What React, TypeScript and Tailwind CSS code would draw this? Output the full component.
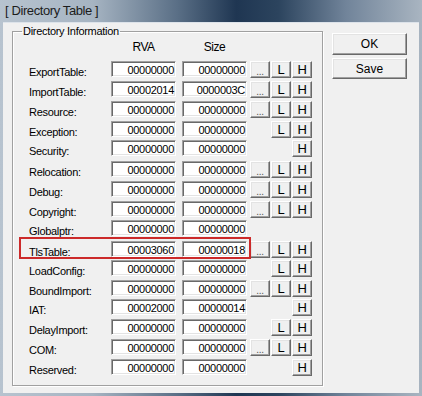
type Row = {
  name: string;
  rva: string;
  size: string;
  btns: string; // slot codes: D = "...", L, H, - = empty
  h: string; // row pitch
  mark?: boolean;
};

const rows: Row[] = [
  { name: 'ExportTable:', rva: '00000000', size: '00000000', btns: 'DLH', h: 'h-[20px]' },
  { name: 'ImportTable:', rva: '00002014', size: '0000003C', btns: 'DLH', h: 'h-[20px]' },
  { name: 'Resource:', rva: '00000000', size: '00000000', btns: 'DLH', h: 'h-[20px]' },
  { name: 'Exception:', rva: '00000000', size: '00000000', btns: '-LH', h: 'h-[19px]' },
  { name: 'Security:', rva: '00000000', size: '00000000', btns: '--H', h: 'h-[21px]' },
  { name: 'Relocation:', rva: '00000000', size: '00000000', btns: 'DLH', h: 'h-[20px]' },
  { name: 'Debug:', rva: '00000000', size: '00000000', btns: 'DLH', h: 'h-[20px]' },
  { name: 'Copyright:', rva: '00000000', size: '00000000', btns: 'DLH', h: 'h-[19px]' },
  { name: 'Globalptr:', rva: '00000000', size: '00000000', btns: '---', h: 'h-[21px]' },
  { name: 'TlsTable:', rva: '00003060', size: '00000018', btns: 'DLH', h: 'h-[19px]', mark: true },
  { name: 'LoadConfig:', rva: '00000000', size: '00000000', btns: '-LH', h: 'h-[20px]' },
  { name: 'BoundImport:', rva: '00000000', size: '00000000', btns: 'DLH', h: 'h-[19px]' },
  { name: 'IAT:', rva: '00002000', size: '00000014', btns: '--H', h: 'h-[20px]' },
  { name: 'DelayImport:', rva: '00000000', size: '00000000', btns: '-LH', h: 'h-[20px]' },
  { name: 'COM:', rva: '00000000', size: '00000000', btns: 'DLH', h: 'h-[20px]' },
  { name: 'Reserved:', rva: '00000000', size: '00000000', btns: '--H', h: 'h-[17px]' },
];

const raised =
  'bg-[#f0f0f0] border border-t-white border-l-white border-r-[#696969] border-b-[#696969] shadow-[inset_-1px_-1px_0_#a0a0a0,inset_1px_1px_0_#e3e3e3]';

const sunken =
  'bg-white border border-t-[#a0a0a0] border-l-[#a0a0a0] border-r-white border-b-white shadow-[inset_1px_1px_0_#696969,inset_-1px_-1px_0_#e3e3e3]';

function Field({ value }: { value: string }) {
  return (
    <div className={`w-[65px] h-[16px] pt-[1px] pr-[1px] text-right text-[11px] leading-[14px] tracking-[-0.3px] text-black ${sunken}`}>
      {value}
    </div>
  );
}

function SmallButton({ code }: { code: string }) {
  if (code === '-') return <div className="w-[20px] h-[17px]" />;
  return (
    <button
      className={`w-[20px] h-[17px] flex items-center justify-center ${raised} ${
        code === 'D' ? 'text-[10px] text-[#555] pt-[3px]' : 'text-[13px] text-black'
      }`}
    >
      {code === 'D' ? '...' : code}
    </button>
  );
}

export default function App() {
  return (
    <div className="w-[422px] h-[396px] flex flex-col bg-[linear-gradient(90deg,#b7c3cf_0%,#a6b4c2_22%,#5a6f86_42%,#1f3652_56%,#2c445e_66%,#71849a_82%,#a9b5c1_100%)] font-['Liberation_Sans',Arial,sans-serif] overflow-hidden">
      {/* title bar */}
      <div className="h-[22px] px-[5px] flex items-center text-[13px] tracking-[-0.4px] text-[#1c1c1c]">
        [ Directory Table ]
      </div>

      {/* client area */}
      <div className="flex-1 mx-[3px] mb-[3px] bg-[#f0f0f0] border-t border-[#dde3ea] flex items-start pt-[1px] pl-[9px]">
        <fieldset className="w-[311px] h-[362px] p-0 m-0 border border-[#a0a0a0] shadow-[inset_1px_1px_0_#fff,1px_1px_0_#fff] text-[11px] tracking-[-0.3px] text-black">
          <legend className="ml-[9px] px-[1px] leading-[14px]">Directory Information</legend>

          <div className="mt-[1px] h-[16px] flex pl-[16px] text-[12px] leading-[16px] tracking-[-0.5px]">
            <div className="w-[82px]" />
            <div className="w-[65px] text-center">RVA</div>
            <div className="w-[65px] ml-[6px] text-center">Size</div>
          </div>

          <div className="mt-[6px] flex flex-col">
            {rows.map(r => (
              <div key={r.name} className={`relative flex items-start pl-[16px] ${r.h}`}>
                <div className="w-[82px] pt-[3px] leading-[16px] h-[16px] whitespace-nowrap">{r.name}</div>
                <Field value={r.rva} />
                <div className="ml-[6px]">
                  <Field value={r.size} />
                </div>
                <div className="ml-[3px] flex gap-[1px]">
                  {r.btns.split('').map((c, i) => (
                    <SmallButton key={i} code={c} />
                  ))}
                </div>
                {r.mark && (
                  <div className="absolute left-[6px] top-[-4px] w-[232px] h-[22px] border-2 border-[#cc2a2a] pointer-events-none" />
                )}
              </div>
            ))}
          </div>
        </fieldset>

        <div className="ml-[9px] mt-[9px] w-[75px] flex flex-col gap-[3px] text-[12px] text-black">
          <button className={`h-[22px] ${raised}`}>OK</button>
          <button className={`h-[21px] ${raised}`}>Save</button>
        </div>
      </div>
    </div>
  );
}
